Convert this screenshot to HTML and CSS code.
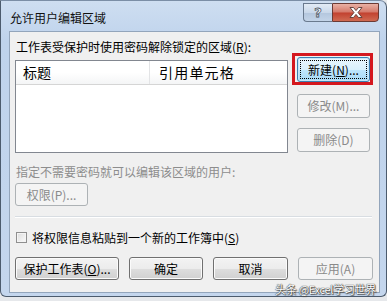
FILE: index.html
```html
<!DOCTYPE html>
<html lang="zh-CN">
<head>
<meta charset="utf-8">
<title>允许用户编辑区域</title>
<link rel="stylesheet" href="styles.css">
</head>
<body>
<div class="window">
  <div class="titlebar">
    <span class="title">允许用户编辑区域</span>
    <div class="caption-btns">
      <div class="cap help"><span class="qmark">?</span></div>
      <div class="cap close">
        <svg width="14" height="11" viewBox="0 0 14 11"><path d="M1 0.5h3.5L7 3.6 9.5 0.5H13L9 5.5l4 5H9.5L7 7.4 4.5 10.5H1l4-5z" fill="#fff" stroke="#5a3a36" stroke-width="0.9" stroke-linejoin="round"/></svg>
      </div>
    </div>
  </div>
  <div class="client">
    <div class="label">工作表受保护时使用密码解除锁定的区域(<u>R</u>):</div>
    <div class="main">
      <div class="list">
        <div class="list-head">
          <div class="col c1">标题</div>
          <div class="col c2">引用单元格</div>
        </div>
      </div>
      <div class="side">
        <div class="highlight">
          <div class="btn default"><span class="focus">新建(<u>N</u>)...</span></div>
        </div>
        <div class="btn disabled modify">修改(M)...</div>
        <div class="btn disabled delete">删除(D)</div>
      </div>
    </div>
    <div class="label gray">指定不需要密码就可以编辑该区域的用户:</div>
    <div class="btn disabled perm">权限(P)...</div>
    <div class="sep"></div>
    <div class="check"><span class="box"></span><span>将权限信息粘贴到一个新的工作簿中(<u>S</u>)</span></div>
    <div class="actions">
      <div class="btn protect">保护工作表(<u>O</u>)...</div>
      <div class="btn ok">确定</div>
      <div class="btn cancel">取消</div>
      <div class="btn disabled apply">应用(A)</div>
    </div>
  </div>
  <div class="watermark">头条 @Excel学习世界</div>
</div>
</body>
</html>
```

FILE: styles.css
```css
* { box-sizing: border-box; margin: 0; padding: 0; }
html, body { width: 387px; height: 301px; overflow: hidden; }
body {
  background: #e6e8eb;
  font-family: "Noto Sans CJK SC", "Microsoft YaHei", sans-serif;
  font-size: 12px;
  color: #000;
}
u { text-decoration: underline; text-underline-offset: 1px; }

.window {
  position: relative;
  width: 387px;
  height: 297px;
  background: linear-gradient(#cedef1, #bfd3ec 40px, #c4d6ed);
  border: 1px solid #4c5b6d;
  border-top: 1px solid #7b8ea6;
  border-radius: 0 7px 6px 6px;
  padding: 0 6px 3px 8px;
  display: flex;
  flex-direction: column;
}

.titlebar {
  height: 30px;
  display: flex;
  align-items: flex-start;
}
.title {
  margin-top: 9px;
  margin-left: 1px;
  line-height: 16px;
  font-size: 12px;
  color: #111;
}
.caption-btns {
  margin-left: auto;
  margin-top: 2px;
  margin-right: 1px;
  display: flex;
}
.cap {
  height: 19px;
  display: flex;
  align-items: center;
  justify-content: center;
  border: 1px solid #6a7a8e;
}
.help {
  width: 29px;
  border-right: none;
  border-radius: 0 0 0 4px;
  background: linear-gradient(#e2ebf5, #c9d8ea 50%, #b3c6dd 51%, #c3d4e8);
}
.qmark {
  font-family: "DejaVu Sans", sans-serif;
  font-weight: bold;
  font-size: 13px;
  line-height: 1;
  color: #fff;
  -webkit-text-stroke: 0.8px #4d5866;
}
.close {
  width: 47px;
  border-color: #6b3a34;
  border-radius: 0 0 4px 0;
  background: linear-gradient(#e9b1a5, #d4796a 48%, #c2412f 52%, #cf6a52);
}

.client {
  height: 262px;
  border: 1px solid #93a5bb;
  background: #f0f0f0;
  padding-left: 5px;
  display: flex;
  flex-direction: column;
  align-items: flex-start;
}
.label {
  padding-top: 8px;
  padding-left: 1px;
  line-height: 13px;
  height: 21px;
}
.label.gray {
  color: #8d8d8d;
  padding-top: 0;
  margin-top: 12px;
  line-height: 14px;
  height: 14px;
}

.main {
  display: flex;
  align-items: flex-start;
  height: 100px;
}
.list {
  margin-top: 7px;
  width: 273px;
  height: 93px;
  border: 1px solid #828790;
  background: #fff;
}
.list-head {
  display: flex;
  height: 24px;
  border-bottom: 1px solid #d5d5d5;
  background: linear-gradient(#ffffff, #ffffff 50%, #f4f5f6);
}
.col {
  font-family: "Noto Sans CJK SC", sans-serif;
  font-size: 14px;
  line-height: 23px;
}
.c1 {
  width: 134px;
  padding-left: 7px;
  border-right: 1px solid #e3e4e6;
}
.c2 {
  padding-left: 9px;
  letter-spacing: 1.2px;
}

.side {
  margin-left: 4px;
  display: flex;
  flex-direction: column;
  align-items: flex-start;
}
.highlight {
  width: 81px;
  height: 32px;
  border: 3px solid #d4171e;
  padding: 1px 0 0 2px;
}

.btn {
  display: flex;
  align-items: center;
  justify-content: center;
  height: 23px;
  border: 1px solid #707070;
  border-radius: 3px;
  background: linear-gradient(#f3f3f3, #ececec 50%, #dedede 51%, #d0d0d0);
  box-shadow: inset 0 0 0 1px #fbfbfb;
  font-size: 12px;
  line-height: 14px;
  color: #000;
  white-space: nowrap;
}
.btn.disabled {
  border-color: #adb2b5;
  background: #f4f4f4;
  box-shadow: none;
  color: #8a8a8a;
}
.btn.default {
  width: 73px;
  height: 25px;
  border-color: #3c7fb1;
  background: linear-gradient(#eaf6fd, #d9f0fc 50%, #bee6fd 51%, #a7d9f5);
  box-shadow: inset 0 0 0 1px #c7e6f7;
}
.focus {
  width: 67px;
  height: 19px;
  border: 1px dotted #000;
  display: flex;
  align-items: center;
  justify-content: center;
}
.modify { width: 73px; height: 24px; margin-top: 9px; margin-left: 5px; }
.delete { width: 73px; height: 24px; margin-top: 10px; margin-left: 5px; }
.perm { width: 73px; margin-top: 4px; }

.sep {
  margin-top: 10px;
  width: 357px;
  height: 2px;
  border-top: 1px solid #d8dde2;
  border-bottom: 1px solid #ffffff;
}

.check {
  margin-top: 12px;
  height: 15px;
  display: flex;
  align-items: center;
  line-height: 15px;
}
.box {
  width: 11px;
  height: 11px;
  margin-left: 1px;
  margin-right: 5px;
  border: 1px solid #8f8f8f;
  background: linear-gradient(135deg, #dcdcdc, #fbfbfb);
  box-shadow: inset 0 0 0 1px #f4f4f4;
}

.actions {
  margin-top: 12px;
  display: flex;
  gap: 10px;
}
.protect { width: 104px; }
.ok { width: 74px; }
.cancel { width: 75px; }
.apply { width: 75px; }

.watermark {
  position: absolute;
  right: 10px;
  bottom: 0px;
  font-size: 11px;
  line-height: 14px;
  color: #ffffff;
  text-shadow: 0 0 1px #333, 0 0 1px #333, 1px 1px 1px #555;
  letter-spacing: -0.3px;
}
```
